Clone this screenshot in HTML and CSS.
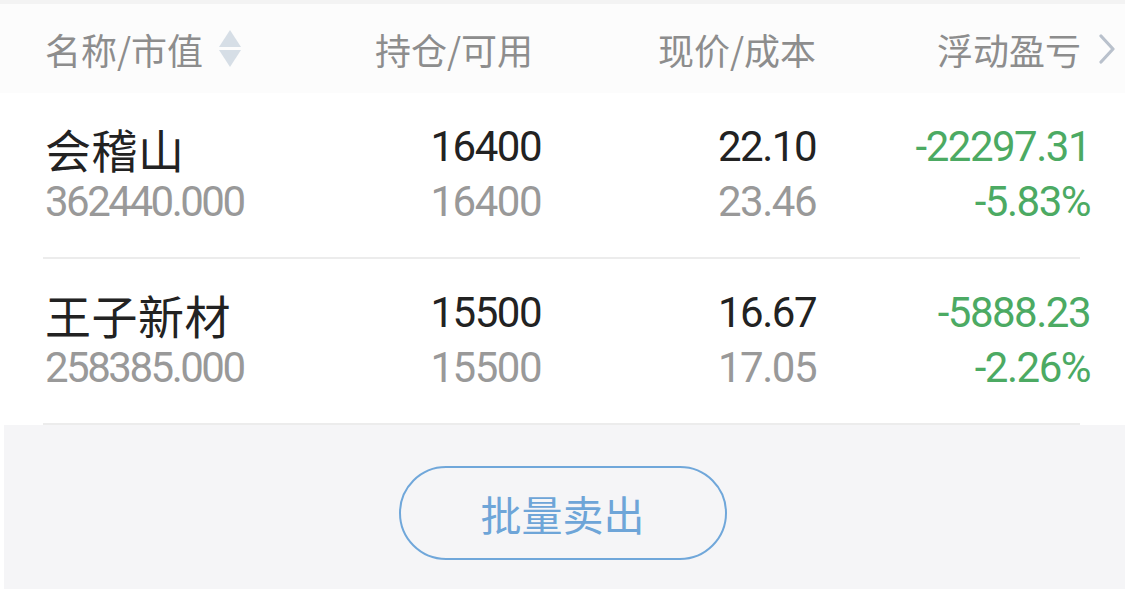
FILE: index.html
```html
<!DOCTYPE html>
<html lang="zh-CN">
<head>
    <meta charset="UTF-8">
    <meta name="viewport" content="width=device-width, initial-scale=1.0">
    <title>持仓</title>
    <link rel="stylesheet" href="styles.css">
</head>
<body>
    <div class="topbar"></div>
    <div class="head">
        <div class="hcell first">
            <span>名称/市值</span>
            <svg class="sort" width="22" height="38" viewBox="0 0 22 38">
                <path d="M11 0 L22 17 L0 17 Z" fill="#d6dee6"/>
                <path d="M0 20 L22 20 L11 37 Z" fill="#d6dee6"/>
            </svg>
        </div>
        <div class="hcell col2">持仓/可用</div>
        <div class="hcell">现价/成本</div>
        <div class="hcell last">
            <span>浮动盈亏</span>
            <svg class="more" width="18" height="30" viewBox="0 0 18 30">
                <path d="M3 2 L15 15 L3 28" fill="none" stroke="#b9c1cc" stroke-width="3.2" stroke-linecap="round" stroke-linejoin="round"/>
            </svg>
        </div>
    </div>

    <div class="list">
        <div class="row">
            <div class="cell first">
                <div class="name">会稽山</div>
                <div class="sub">362440.000</div>
            </div>
            <div class="cell">
                <div class="main">16400</div>
                <div class="sub">16400</div>
            </div>
            <div class="cell">
                <div class="main">22.10</div>
                <div class="sub">23.46</div>
            </div>
            <div class="cell loss">
                <div class="main">-22297.31</div>
                <div class="sub">-5.83%</div>
            </div>
        </div>
        <div class="row">
            <div class="cell first">
                <div class="name">王子新材</div>
                <div class="sub">258385.000</div>
            </div>
            <div class="cell">
                <div class="main">15500</div>
                <div class="sub">15500</div>
            </div>
            <div class="cell">
                <div class="main">16.67</div>
                <div class="sub">17.05</div>
            </div>
            <div class="cell loss">
                <div class="main">-5888.23</div>
                <div class="sub">-2.26%</div>
            </div>
        </div>
    </div>

    <div class="footer">
        <button type="button" class="batch">批量卖出</button>
    </div>
</body>
</html>
```

FILE: styles.css
```css
body {
    margin: 0;
    width: 1125px;
    height: 589px;
    overflow: hidden;
    background-color: #f5f5f7;
    font-family: "Noto Sans CJK SC", "Noto Sans", sans-serif;
}
.topbar {
    height: 4px;
    background-color: #f3f3f3;
}
.head,
.row {
    display: grid;
    grid-template-columns: 245px 251px 275px 274px;
    padding: 0 35px 0 45px;
}
.head {
    height: 89px;
    background-color: #fcfcfc;
    align-items: center;
}
.hcell {
    display: flex;
    justify-content: flex-end;
    align-items: center;
    font-size: 36px;
    color: #8d8d8d;
    line-height: 40px;
}
.hcell.first {
    justify-content: flex-start;
}
.hcell.col2 {
    padding-right: 8px;
}
.hcell.last {
    margin-right: -26px;
}
.sort {
    margin-left: 16px;
}
.more {
    margin-left: 17px;
}
.list {
    background-color: #fff;
}
.row {
    position: relative;
    height: 166px;
    box-sizing: border-box;
    padding-top: 26px;
}
.row::after {
    content: "";
    position: absolute;
    left: 43px;
    right: 45px;
    bottom: 0;
    height: 2px;
    background-color: #ececec;
}
.cell {
    text-align: right;
    font-family: Roboto, "Noto Sans", sans-serif;
    font-size: 42px;
    line-height: 55px;
    letter-spacing: -1.5px;
}
.cell.first {
    text-align: left;
}
.cell.first .sub {
    letter-spacing: -2.5px;
}
.main {
    color: #222;
}
.sub {
    color: #999;
}
.name {
    font-family: "Noto Sans CJK SC", sans-serif;
    font-size: 46px;
    letter-spacing: 0.5px;
    color: #222;
    line-height: 50px;
    height: 55px;
    padding-top: 4px;
    box-sizing: border-box;
}
.loss .main,
.loss .sub {
    color: #4caa63;
}
.footer {
    border-left: 4px solid #fff;
    height: 164px;
    display: flex;
    justify-content: center;
    padding-top: 41px;
    box-sizing: border-box;
}
.batch {
    width: 328px;
    height: 94px;
    border: 2px solid #70a7da;
    border-radius: 47px;
    background-color: transparent;
    color: #6ea5d8;
    font-family: "Noto Sans CJK SC", sans-serif;
    font-size: 41px;
    cursor: pointer;
    margin-left: -4px;
}
```
